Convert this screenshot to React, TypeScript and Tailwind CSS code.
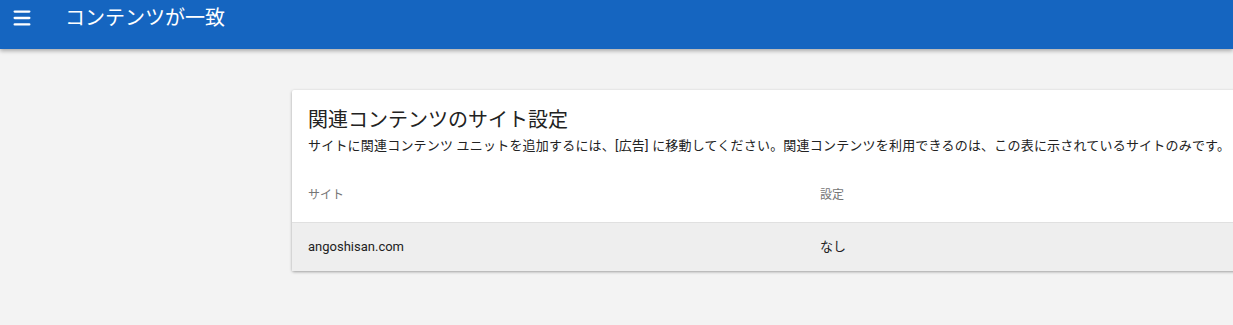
import { Menu } from "lucide-react";

export default function App() {
  return (
    <div
      className="w-[1233px] h-[325px] overflow-hidden bg-[#f3f3f3] relative"
      style={{ fontFamily: '"Roboto", "Noto Sans CJK JP", sans-serif' }}
    >
      <header className="h-[49px] bg-[#1565c0] flex items-start text-white shadow-[0_2px_4px_rgba(0,0,0,0.3)] relative z-10">
        <div className="w-[44px] h-[36px] flex items-center justify-center">
          <Menu className="w-[22px] h-[22px]" strokeWidth={2.5} />
        </div>
        <h1 className="ml-[21px] mt-[5px] text-[20px] leading-[26px] font-normal">
          コンテンツが一致
        </h1>
      </header>

      <div className="pl-[292px] pt-[41px]">
        <div className="w-[1100px] bg-white shadow-[0_1px_3px_rgba(0,0,0,0.35)] rounded-[2px]">
          <div className="px-4 pt-[16px]">
            <h2 className="text-[20px] leading-[28px] text-[#222]">
              関連コンテンツのサイト設定
            </h2>
            <p className="text-[13px] leading-[18px] text-[#222] whitespace-nowrap mt-[3px] tracking-[0.2px]">
              サイトに関連コンテンツ ユニットを追加するには、[広告] に移動してください。関連コンテンツを利用できるのは、この表に示されているサイトのみです。 くわしくは、ヘルプセンターをご覧ください。
            </p>
          </div>
          <div className="mt-[12px]">
            <div className="flex h-[56px] items-center border-b border-[#e0e0e0] text-[12px] text-[#757575] px-4">
              <div className="w-[512px]">サイト</div>
              <div>設定</div>
            </div>
            <div className="flex h-[48px] items-center bg-[#eeeeee] text-[13px] text-[#222] px-4">
              <div className="w-[512px]">angoshisan.com</div>
              <div>なし</div>
            </div>
          </div>
        </div>
      </div>
    </div>
  );
}
